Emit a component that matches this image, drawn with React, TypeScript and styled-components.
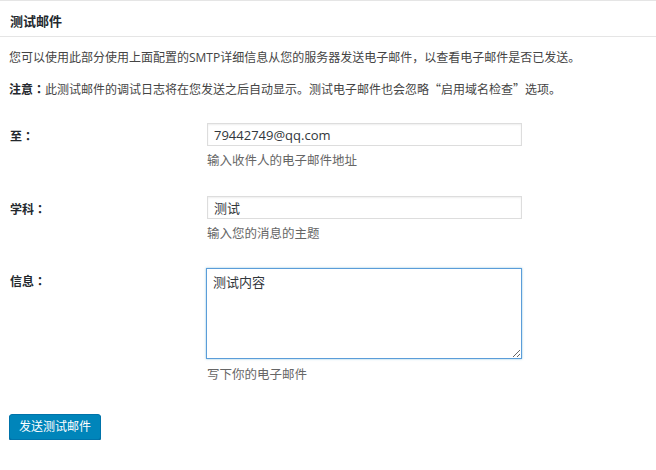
import styled, { createGlobalStyle } from "styled-components"

const Global = createGlobalStyle`
  body {
    margin: 0;
    background: #fff;
    font-family: "Open Sans", "Noto Sans CJK SC", sans-serif;
    color: #444;
  }
`

const Panel = styled.div`
  border-top: 1px solid #e5e5e5;
  width: 656px;
`

const Header = styled.div`
  height: 35px;
  padding: 0 10px;
  display: flex;
  align-items: center;
  border-bottom: 1px solid #e5e5e5;
`

const Title = styled.h3`
  margin: 0;
  font-size: 13px;
  font-weight: 700;
  color: #23282d;
  line-height: 18px;
  padding-top: 4px;
`

const Body = styled.div`
  padding: 11px 9px 0;
`

const Note = styled.p`
  margin: 0 0 13px;
  font-size: 12px;
  line-height: 18px;
  color: #444;
`

// centred full-width punctuation, as in the reference
const Strong = styled.strong`
  font-family: "Noto Sans CJK TC", sans-serif;
  color: #23282d;
`

const Quote = styled.span`
  font-family: "Noto Sans CJK SC", sans-serif;
`

const Row = styled.div<{ $top: number }>`
  display: grid;
  grid-template-columns: 198px 315px;
  margin-top: ${(p) => p.$top}px;
`

const Label = styled.label`
  padding: 4px 0 0 1px;
  font-family: "Noto Sans CJK TC", sans-serif;
  font-size: 12px;
  font-weight: 700;
  line-height: 18px;
  color: #23282d;
`

const Field = styled.div`
  display: flex;
  flex-direction: column;
`

const Input = styled.input`
  box-sizing: border-box;
  width: 315px;
  height: 23px;
  margin: 0;
  padding: 0 6px;
  border: 1px solid #ddd;
  box-shadow: inset 0 1px 2px rgba(0, 0, 0, 0.07);
  font-family: "Open Sans", "Noto Sans CJK SC", sans-serif;
  font-size: 13px;
  color: #32373c;
  outline: none;
`

const Area = styled.textarea`
  box-sizing: border-box;
  width: 316px;
  height: 91px;
  margin: 0 0 0 -1px;
  padding: 4px 6px;
  border: 1px solid #5b9dd9;
  box-shadow: 0 0 2px rgba(30, 140, 190, 0.5);
  font-family: "Open Sans", "Noto Sans CJK SC", sans-serif;
  font-size: 13px;
  line-height: 18px;
  color: #32373c;
  outline: none;
  resize: vertical;
`

const Hint = styled.span<{ $gap: number }>`
  margin-top: ${(p) => p.$gap}px;
  font-size: 12.5px;
  line-height: 18px;
  color: #666;
`

const Button = styled.button`
  margin-top: 30px;
  height: 26px;
  padding: 0 9px 1px;
  background: #0085ba;
  border: 1px solid #0073aa;
  border-radius: 3px;
  box-shadow: 0 1px 0 #006799;
  color: #fff;
  font-family: "Open Sans", "Noto Sans CJK SC", sans-serif;
  font-size: 12px;
  line-height: 22px;
  cursor: pointer;
`

export default function App() {
  return (
    <Panel>
      <Global />
      <Header>
        <Title>测试邮件</Title>
      </Header>
      <Body>
        <Note>
          您可以使用此部分使用上面配置的SMTP详细信息从您的服务器发送电子邮件<Quote>，</Quote>以查看电子邮件是否已发送。
        </Note>
        <Note>
          <Strong>注意：</Strong>此测试邮件的调试日志将在您发送之后自动显示。测试电子邮件也会忽略<Quote>“启用域名检查”</Quote>选项。
        </Note>
        <Row $top={24}>
          <Label>至：</Label>
          <Field>
            <Input defaultValue="79442749@qq.com" />
            <Hint $gap={6}>输入收件人的电子邮件地址</Hint>
          </Field>
        </Row>
        <Row $top={26}>
          <Label>学科：</Label>
          <Field>
            <Input defaultValue="测试" />
            <Hint $gap={6}>输入您的消息的主题</Hint>
          </Field>
        </Row>
        <Row $top={25}>
          <Label>信息：</Label>
          <Field>
            <Area defaultValue="测试内容" />
            <Hint $gap={7}>写下你的电子邮件</Hint>
          </Field>
        </Row>
        <Button>发送测试邮件</Button>
      </Body>
    </Panel>
  )
}
